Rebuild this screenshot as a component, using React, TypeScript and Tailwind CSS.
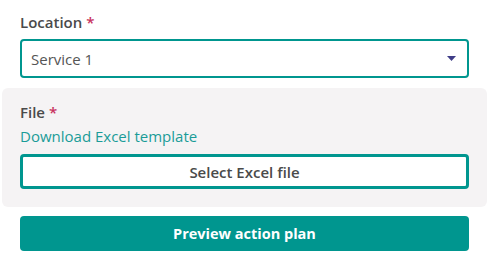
import React from 'react';

const App = () => {
  return (
    <div className="w-[495px] h-[266px] bg-white text-[15px] leading-[22px] font-['Open_Sans',sans-serif]">
      <div className="w-[485px] ml-[2px] pt-[11px]">
        {/* Location */}
        <div className="px-[18px]">
          <label className="block font-semibold text-[#4a4a4a]">
            Location <span className="text-[#c8325e]">*</span>
          </label>
          <div className="mt-[6px] h-[39px] flex items-center justify-between border-2 border-[#00968f] rounded-[4px] bg-white pl-[9px] pr-[11px]">
            <span className="text-[#555555]">Service 1</span>
            <svg width="9" height="5" viewBox="0 0 9 5">
              <path d="M0 0h9L4.5 5z" fill="#3f3d87" />
            </svg>
          </div>
        </div>

        {/* File */}
        <div className="mt-[10px] bg-[#f5f3f4] rounded-[6px] px-[18px] pt-[13px] pb-[18px]">
          <label className="block font-semibold text-[#4a4a4a]">
            File <span className="text-[#c8325e]">*</span>
          </label>
          <a className="block mt-[2px] text-[#1a9c98]">Download Excel template</a>
          <button className="mt-[7px] w-full h-[35px] border-[3px] border-[#00968f] rounded-[4px] bg-white font-semibold text-[#4a4a4a]">
            Select Excel file
          </button>
        </div>

        <div className="px-[18px]">
          <button className="mt-[9px] w-full h-[35px] rounded-[4px] bg-[#00968f] text-[14.5px] font-bold text-white">
            Preview action plan
          </button>
        </div>
      </div>
    </div>
  );
};

export default App;
